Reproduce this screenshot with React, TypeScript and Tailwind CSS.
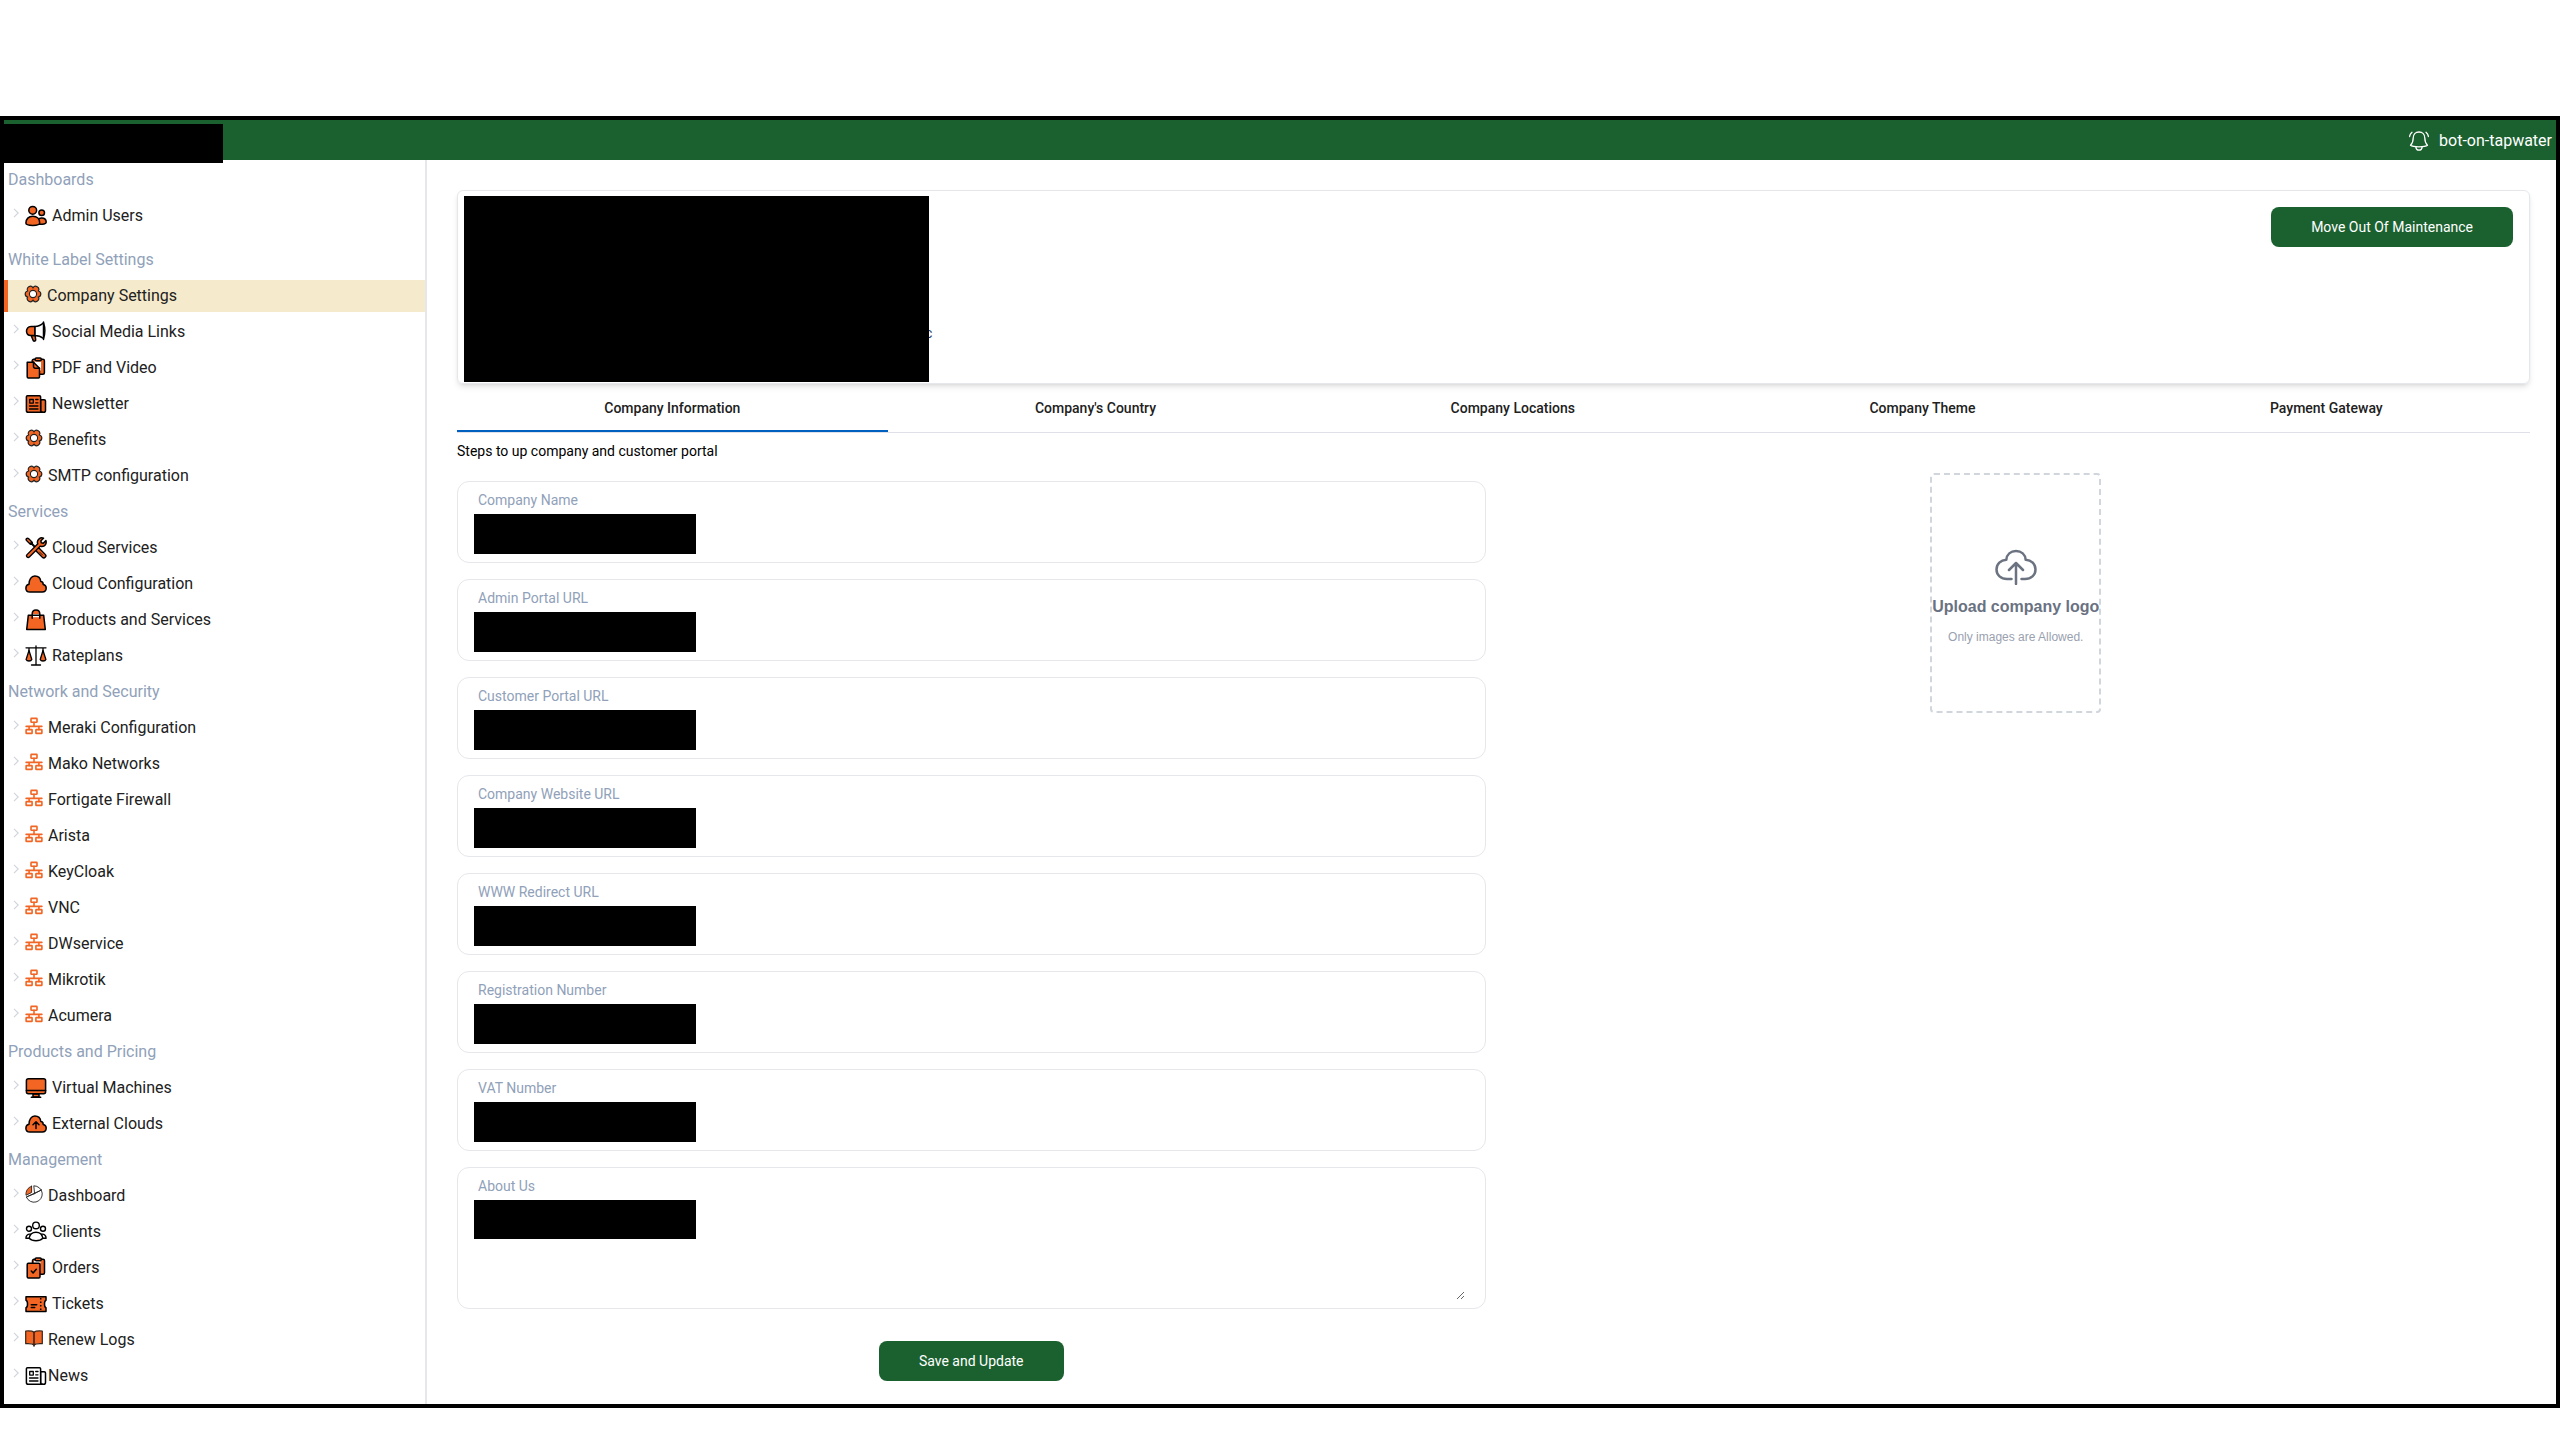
import type { ReactNode } from 'react';
import clsx from 'clsx';

const ORANGE = '#f26522';

const UsersIcon = () => (
  <g fill={ORANGE}>
    <circle cx="16.7" cy="7.7" r="2.8" />
    <path d="M12.5 19.3c6 .2 8.7-.3 8.7-2 0-2.7-2-4.3-4.5-4.3-1.8 0-3.5.8-4.2 2.3z" />
    <circle cx="7.7" cy="5.3" r="3.9" />
    <path d="M.9 18c0-4 2.7-6.8 6.9-6.8s6.9 2.8 6.9 6.8c0 1.7-2.9 2.4-6.9 2.4S.9 19.7.9 18z" />
  </g>
);

const MegaphoneIcon = () => (
  <>
    <path d="M6.2 14.5h3.9l.6 4.3c.1 1.4-2.2 1.9-2.6.5z" fill={ORANGE} />
    <path d="M9.8 5.6c3.4-.2 6.2-1.4 8.7-3.9 1.7 4.8 1.7 10.800 0 15.800-2.500-2-5.300-3-8.700-3z" fill="white" />
    <path d="M9.8 5.6v9H6c-3 0-4.5-2-4.5-4.500S3 5.600 6 5.600z" fill={ORANGE} />
    <path d="M18.5 1v17.5" fill="none" />
  </>
);

const DocumentsIcon = () => (
  <>
    <rect x="7.2" y="2.3" width="12.2" height="15" rx="1.5" fill={ORANGE} />
    <path d="M9.5 4.5h6.500v9h-6.500z" fill="white" stroke="none" />
    <rect x="10.2" y=".9" width="6" height="2.8" rx="1" fill={ORANGE} />
    <path d="M2.2 5.3h6.3l6 6v8.5c0 .6-.4 1.1-1 1.1H3.3c-.6 0-1.1-.5-1.1-1.1z" fill={ORANGE} />
    <path d="M8.5 5.3v4c0 1 .8 2 2 2h4" fill="none" />
  </>
);

const NewspaperIcon = ({ fill = ORANGE }: { fill?: string }) => (
  <>
    <path d="M15.6 6.8h3.6c.8 0 1.3.5 1.3 1.2v9.5c0 1.1-.8 1.8-1.9 1.8h-3z" fill={fill} />
    <path d="M2.5 2.7h12c.6 0 1.1.5 1.1 1.1v13.5c0 1 .6 2 1.9 2H3.3c-1.2 0-1.9-.8-1.9-1.9V3.8c0-.6.5-1.1 1.1-1.1z" fill={fill} />
    <path d="M4.7 6.5h3.6v3.600H4.7zM10.7 6.5h2.3M10.7 9.8h2.3M4.5 13h8.5M4.5 16h8.5" fill="none" strokeWidth="1.3" />
  </>
);

const GearIcon = () => (
  <g stroke="#222">
    <path
      d="M14.3 6A3.05 3.05 0 0 0 9 2.900a3.05 3.05 0 0 0-5.300 3.100 3.05 3.05 0 0 0 0 6A3.05 3.05 0 0 0 9 15.100a3.05 3.05 0 0 0 5.300-3.100 3.05 3.05 0 0 0 0-6z"
      fill={ORANGE}
      strokeWidth="1.2"
    />
    <circle cx="9" cy="9" r="3.6" fill="white" strokeWidth="1.1" />
  </g>
);

const ToolsIcon = () => (
  <>
    <g fill="none" strokeWidth="4.6">
      <path d="M3.2 18.8 15 7" />
      <path d="m13 13 5.8 5.8" strokeWidth="5.4" />
      <path d="M2.5 2.5 6 6" strokeWidth="4" />
      <path d="m5 5 8 8" strokeWidth="2" />
    </g>
    <path d="M18.500 1.2 15.900 3.8l.4 2 2 .4 2.600-2.600c1 3-1 6.200-4.300 6-2.500-.2-4.400-2.300-4.200-4.700.2-2.800 3-5 6.100-3.700z" fill={ORANGE} />
    <path d="M3.2 18.8 14 8" stroke={ORANGE} strokeWidth="2" fill="none" />
    <path d="m13.5 13.5 5.2 5.2" stroke={ORANGE} strokeWidth="2.8" fill="none" />
    <path d="M2.7 2.7 5 5" stroke={ORANGE} strokeWidth="1.6" fill="none" />
    <path d="m14.5 15 3 3" strokeWidth=".8" fill="none" />
  </>
);

const cloudPath =
  'M5 19.1C2.6 19.1.9 17.4.9 15.2c0-2 1.3-3.5 3.1-3.9C4 6.5 6.3 3.1 9.8 3.1c3.3 0 5.7 2.2 6 5.4 1.2 0 2.4 1.1 2.4 2.9 1.7.3 3 1.8 3 3.7 0 2.3-1.7 4-4 4z';

const CloudIcon = () => <path d={cloudPath} fill={ORANGE} />;

const CloudUpIcon = () => (
  <>
    <path d={cloudPath} fill={ORANGE} />
    <path d="M11 15.5V9.2M8 11.7l3-2.9 3 2.9" fill="none" />
  </>
);

const BagIcon = () => (
  <>
    <path d="M7.200 5C7.200 2.500 8.700 1 11 1s3.800 1.500 3.800 4z" fill={ORANGE} stroke="none" />
    <path d="M3.3 6.300h15.400l1.600 14.300H1.700z" fill={ORANGE} />
    <path d="M7.400 7.700h7.200" stroke="white" strokeWidth="1.2" />
    <path d="M7.2 9.3V5C7.200 2.500 8.700 1 11 1s3.800 1.500 3.800 4v4.3" fill="none" />
  </>
);

const ScalesIcon = () => (
  <>
    <path d="M1 2.8h20M11 1v18.7M6.5 20h9M4 3v4M18 3v4" fill="none" strokeWidth="1.3" />
    <path d="M4 5.5 6.8 14.5c-.8 2-4.8 2-5.7 0zM18 5.5l2.9 9c-.9 2-4.9 2-5.7 0z" fill={ORANGE} strokeWidth="1.3" />
  </>
);

const NetworkIcon = () => (
  <g fill="none" stroke={ORANGE} strokeWidth="1.6">
    <rect x="6" y="1.4" width="6" height="3.8" rx=".5" />
    <rect x="1.1" y="12.6" width="6" height="3.8" rx=".5" />
    <rect x="10.9" y="12.6" width="6" height="3.8" rx=".5" />
    <path d="M9 5.2V9M1.100 9.400h15.800M4.100 9.400v3.200M13.900 9.400v3.200" />
  </g>
);

const MonitorIcon = () => (
  <>
    <path d="M8 17h6v3H8z" fill={ORANGE} />
    <rect x="1.4" y="1.7" width="19.2" height="15" rx="2" fill={ORANGE} />
    <path d="M1.4 13.5h19.2M6.3 20.2h9.4" fill="none" />
  </>
);

const PieIcon = () => (
  <g stroke="#222" strokeWidth=".9">
    <path d="M9.2.8A8.2 8.2 0 1 1 1.4 12L9.2 8.8z" fill="white" />
    <path d="M6.6 1.3v6.2L1 10.3C.6 6 2.8 2.5 6.6 1.3z" fill={ORANGE} />
    <path d="M9.2 8.8 16.3 5M1.4 12l15-7" fill="none" />
  </g>
);

const ClientsIcon = () => (
  <g fill="white" strokeWidth="1.4">
    <circle cx="4" cy="7.7" r="2.5" />
    <circle cx="18" cy="7.7" r="2.5" />
    <path d="M5.5 13.3C3 12.7.9 14.3.9 17.2h4zM16.5 13.3c2.5-.6 4.6 1 4.6 3.9h-4z" />
    <circle cx="11" cy="4.4" r="3.3" />
    <path d="M4.2 17.2c.6-3.6 3.2-6 6.8-6s6.2 2.4 6.8 6c-1.6 1.7-4 2.5-6.8 2.5s-5.2-.8-6.8-2.5z" />
  </g>
);

const OrdersIcon = () => (
  <>
    <rect x="7.5" y="2.3" width="12" height="15" rx="1.5" fill={ORANGE} />
    <path d="M9 4h6.5v10H9z" fill="white" stroke="none" />
    <rect x="10.2" y=".9" width="6" height="2.8" rx="1" fill={ORANGE} />
    <rect x="2.2" y="6.3" width="12.8" height="14.6" rx="1.2" fill={ORANGE} />
    <path d="m6.3 14 1.8 1.9 3.2-3.700" fill="none" />
  </>
);

const TicketIcon = () => (
  <>
    <path d="M1 3.8h20v3.4c-2 .6-2 6.800 0 7.600v3.800H1v-3.800c2-.8 2-7 0-7.600z" fill={ORANGE} />
    <path d="M6.3 11.7h5.4M6.3 14.5h3.4" fill="none" />
    <path d="M15.7 5v13" strokeDasharray="1.5 2" strokeLinecap="butt" fill="none" />
  </>
);

const BookIcon = () => (
  <g stroke="#3a2418" strokeWidth="1.2">
    <path d="M9 3.2C7.5 1.9 4 1.7.7 2v12.7c3.3-.2 6.8-.1 8.3 1.3 1.5-1.4 5-1.5 8.3-1.3V2C14 1.700 10.500 1.900 9 3.200z" fill={ORANGE} />
    <path d="M9 3.2V17" strokeWidth="1.6" />
  </g>
);

type Item = { label: string; icon: ReactNode; small?: boolean; active?: boolean; tight?: boolean };

const network = (label: string): Item => ({ label, icon: <NetworkIcon />, small: true });

const sections: { title: string; items: Item[] }[] = [
  { title: 'Dashboards', items: [{ label: 'Admin Users', icon: <UsersIcon /> }] },
  {
    title: 'White Label Settings',
    items: [
      { label: 'Company Settings', icon: <GearIcon />, small: true, active: true },
      { label: 'Social Media Links', icon: <MegaphoneIcon /> },
      { label: 'PDF and Video', icon: <DocumentsIcon /> },
      { label: 'Newsletter', icon: <NewspaperIcon /> },
      { label: 'Benefits', icon: <GearIcon />, small: true },
      { label: 'SMTP configuration', icon: <GearIcon />, small: true },
    ],
  },
  {
    title: 'Services',
    items: [
      { label: 'Cloud Services', icon: <ToolsIcon /> },
      { label: 'Cloud Configuration', icon: <CloudIcon /> },
      { label: 'Products and Services', icon: <BagIcon /> },
      { label: 'Rateplans', icon: <ScalesIcon /> },
    ],
  },
  {
    title: 'Network and Security',
    items: [
      network('Meraki Configuration'),
      network('Mako Networks'),
      network('Fortigate Firewall'),
      network('Arista'),
      network('KeyCloak'),
      network('VNC'),
      network('DWservice'),
      network('Mikrotik'),
      network('Acumera'),
    ],
  },
  {
    title: 'Products and Pricing',
    items: [
      { label: 'Virtual Machines', icon: <MonitorIcon /> },
      { label: 'External Clouds', icon: <CloudUpIcon /> },
    ],
  },
  {
    title: 'Management',
    items: [
      { label: 'Dashboard', icon: <PieIcon />, small: true },
      { label: 'Clients', icon: <ClientsIcon /> },
      { label: 'Orders', icon: <OrdersIcon /> },
      { label: 'Tickets', icon: <TicketIcon /> },
      { label: 'Renew Logs', icon: <BookIcon />, small: true },
      { label: 'News', icon: <NewspaperIcon fill="white" />, tight: true },
    ],
  },
];

const tabs = [
  'Company Information',
  "Company's Country",
  'Company Locations',
  'Company Theme',
  'Payment Gateway',
];

const fields = [
  { id: 'company-name', label: 'Company Name' },
  { id: 'admin-url', label: 'Admin Portal URL' },
  { id: 'customer-url', label: 'Customer Portal URL' },
  { id: 'website-url', label: 'Company Website URL' },
  { id: 'redirect-url', label: 'WWW Redirect URL' },
  { id: 'registration', label: 'Registration Number' },
  { id: 'vat', label: 'VAT Number' },
];

function NavItem({ label, icon, small, active, tight }: Item) {
  return (
    <li className="py-0.5">
      <a
        href="#"
        className={clsx(
          'flex h-8 items-center',
          active ? 'border-l-4 border-[#f26522] bg-[#f5eacb] pl-4' : 'pl-[9px]',
        )}
      >
        {!active && (
          <svg viewBox="0 0 6 10" className="mr-1.5 mb-1.5 h-2.5 w-1.5" fill="none" stroke="#d1d5db">
            <path d="m1 .8 4.2 4.2L1 9.2" strokeWidth="1.2" />
          </svg>
        )}
        <svg
          viewBox={small ? '0 0 18 18' : '0 0 22 22'}
          className={small ? 'mb-1 size-[18px]' : 'size-[22px]'}
          stroke="black"
          strokeWidth="1.5"
          strokeLinecap="round"
          strokeLinejoin="round"
        >
          {icon}
        </svg>
        <span className={tight ? 'ml-px' : 'ml-[5px]'}>{label}</span>
      </a>
    </li>
  );
}

function Sidebar() {
  return (
    <nav className="w-[423px] shrink-0 border-r-2 border-gray-200 pt-0.5 pb-2.5">
      {sections.map((section, i) => (
        <section key={section.title} className={i === 1 ? 'mt-2' : undefined}>
          <h2 className="pl-1 leading-9 text-slate-400">{section.title}</h2>
          <ul>
            {section.items.map((item) => (
              <NavItem key={item.label} {...item} />
            ))}
          </ul>
        </section>
      ))}
    </nav>
  );
}

function Header() {
  return (
    <header className="relative flex h-10 items-center justify-end bg-[#1b612f] pt-0.5 pr-1 text-white">
      <div className="absolute top-1 left-0 h-[39px] w-[219px] bg-black" />
      <button type="button" aria-label="Notifications" className="mr-2.5">
        <svg viewBox="0 0 20 20" className="size-5" fill="none" stroke="white" strokeWidth="1.3" strokeLinecap="round" strokeLinejoin="round">
          <path d="M10 1C6.5 1 4.2 3.5 4.2 7c0 3.3-.6 5.3-2.7 7.3 1.2 1 4 1.5 8.5 1.5s7.3-.5 8.5-1.5c-2.1-2-2.7-4-2.7-7.3 0-3.5-2.3-6-5.8-6z" />
          <path d="M6.8 15.8c.3 2.2 1.4 3.400 3.200 3.400s2.900-1.200 3.200-3.400M3 1.3C1.5 2.5.8 3.8.6 5.5M17 1.3c1.500 1.200 2.200 2.500 2.400 4.200" />
        </svg>
      </button>
      <span>bot-on-tapwater</span>
    </header>
  );
}

function UploadBox() {
  return (
    <button
      type="button"
      className="flex h-60 flex-col items-center justify-center rounded border-2 border-dashed border-gray-300 pt-3 font-['Liberation_Sans',sans-serif]"
    >
      <svg viewBox="0 0 42 36" className="h-9 w-[42px]" fill="none" stroke="#6b7280" strokeWidth="2.5" strokeLinecap="round" strokeLinejoin="round">
        <path d="M16.5 30H12C6 30 1.5 26 1.5 20.5c0-5.6 4.200-9.500 9.800-9.700C11.800 5.500 15.600 2 21 2s9.200 3.500 9.700 8.800c5.600.2 9.800 4.100 9.800 9.700C40.500 26 36 30 30 30h-3.500" />
        <path d="M21 35V14M14 21l7-7 7 7" />
      </svg>
      <span className="mt-2 text-base leading-7 font-bold text-gray-500">Upload company logo</span>
      <span className="mt-1 text-xs leading-6 text-gray-400">Only images are Allowed.</span>
    </button>
  );
}

function CompanyForm() {
  return (
    <form className="flex flex-col gap-4 pt-2">
      {fields.map((field) => (
        <div key={field.id} className="h-[82px] rounded-xl border border-gray-200 px-4 pt-2">
          <label htmlFor={field.id} className="ml-1 block text-sm leading-5 text-slate-400">
            {field.label}
          </label>
          <input id={field.id} type="text" className="mt-1 block h-10 w-[222px] bg-black" />
        </div>
      ))}
      <div className="h-[142px] rounded-xl border border-gray-200 pt-2 pr-5 pl-4">
        <label htmlFor="about" className="ml-1 block text-sm leading-5 text-slate-400">
          About Us
        </label>
        <div className="relative mt-1">
          <textarea id="about" className="block h-[100px] w-full resize" />
          <div className="absolute top-0 left-0 h-[39px] w-[222px] bg-black" />
        </div>
      </div>
      <button type="button" className="mt-4 h-10 self-center rounded-lg bg-[#1b612f] px-10 text-sm text-white">
        Save and Update
      </button>
    </form>
  );
}

export default function App() {
  return (
    <div className="bg-white pt-[116px] font-[Roboto,sans-serif] text-base text-[#212121]">
      <div className="border-4 border-black">
        <Header />
        <div className="flex">
          <Sidebar />
          <main className="min-w-0 grow pt-[30px] pr-[26px] pb-5 pl-[30px]">
            <div className="flex h-[194px] items-start rounded-md border border-gray-200 pt-[5px] pr-4 pl-1.5 shadow-md">
              <div className="z-10 h-[186px] w-[465px] bg-black" />
              <span className="mt-[127px] -ml-1 text-sm text-[#1e3a6e]">c</span>
              <button type="button" className="mt-[11px] ml-auto h-10 rounded-lg bg-[#1b612f] px-10 text-sm text-white">
                Move Out Of Maintenance
              </button>
            </div>

            <div role="tablist" className="flex border-b border-[#e0e0ea]">
              {tabs.map((tab, i) => (
                <button
                  key={tab}
                  type="button"
                  role="tab"
                  aria-selected={i === 0}
                  className={clsx(
                    'h-12 flex-auto border-b-2 pt-0.5 text-sm font-medium',
                    i === 0 ? 'border-[#0060c0]' : 'border-transparent',
                  )}
                >
                  {tab}
                </button>
              ))}
            </div>

            <p className="mt-2 text-sm leading-5 text-black">Steps to up company and customer portal</p>

            <div className="mt-3 grid grid-cols-2 gap-4">
              <CompanyForm />
              <div className="flex items-start justify-center">
                <UploadBox />
              </div>
            </div>
          </main>
        </div>
      </div>
    </div>
  );
}
